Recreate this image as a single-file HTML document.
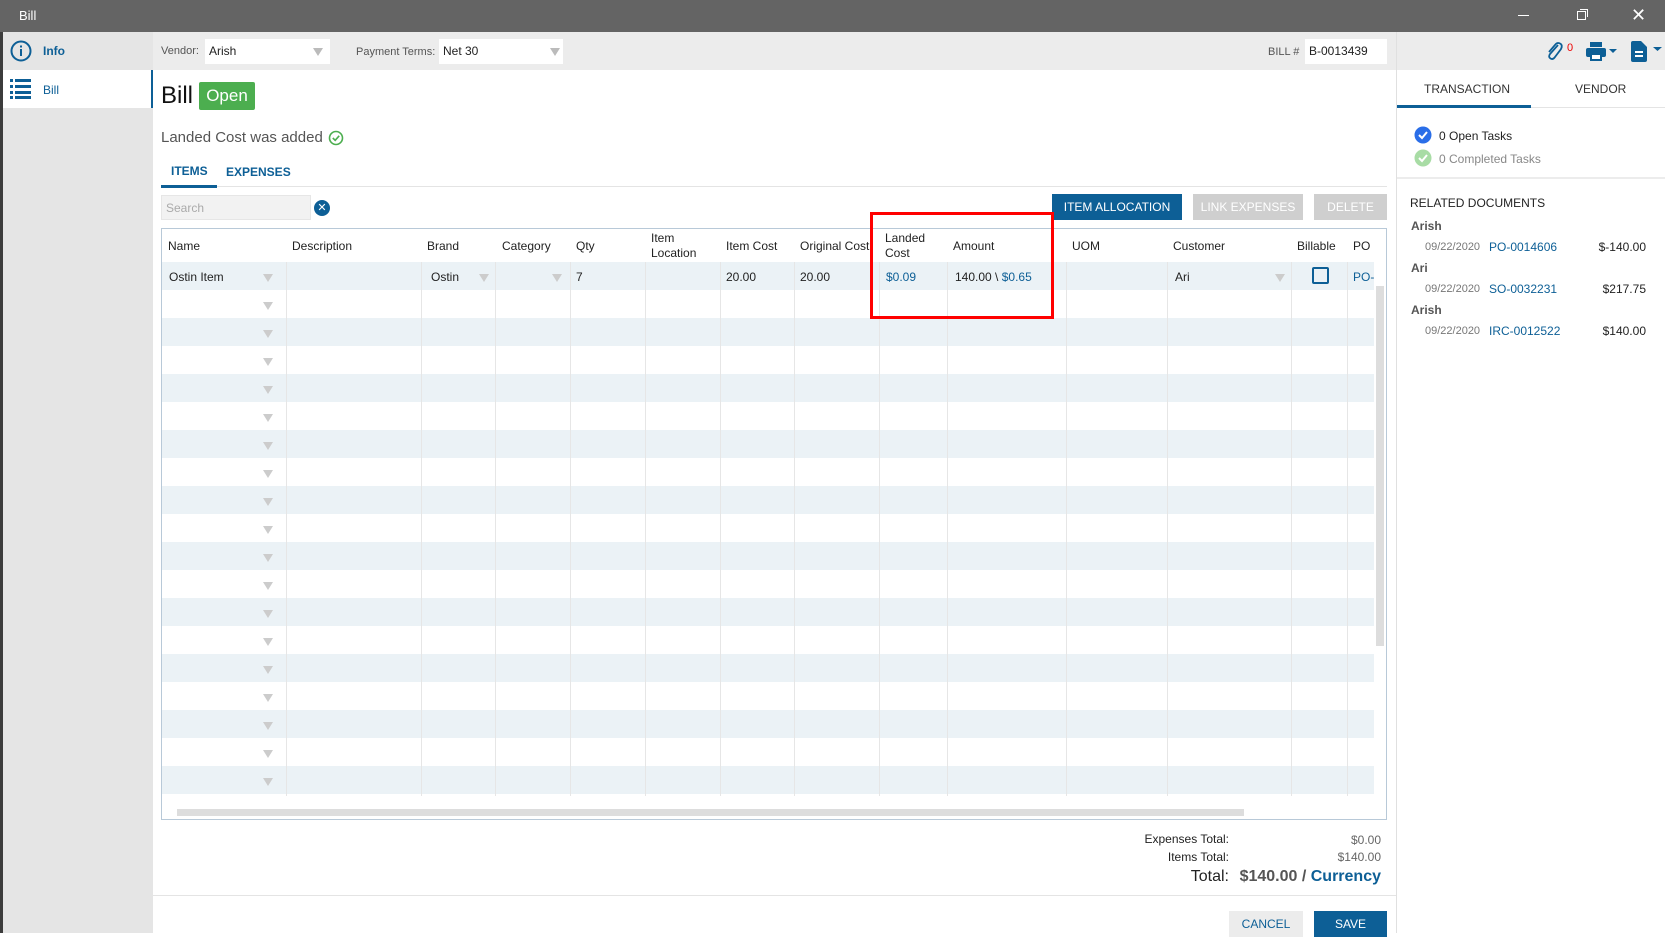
<!DOCTYPE html>
<html><head><meta charset="utf-8"><style>
*{box-sizing:border-box;margin:0;padding:0}
body{width:1665px;height:933px;overflow:hidden;font-family:"Liberation Sans",sans-serif;font-size:12px;color:#222;background:#fff;position:relative}
.a{position:absolute}
.blue{color:#0d5f96}
.sel{position:absolute;background:#fff;height:25px;font-size:12px;padding:5px 4px}
.tri{position:absolute;width:0;height:0;border-left:5px solid transparent;border-right:5px solid transparent;border-top:8px solid #bbb}
.btn{position:absolute;height:26px;color:#fff;font-size:12px;text-align:center;line-height:26px}
.col{position:absolute;top:0;bottom:0;width:1px;background:#e6e6e6}
.hd{position:absolute;top:0;font-size:12px;color:#222}
.row{position:absolute;left:0;width:1212px;height:28px}
</style></head><body>
<div class="a" style="left:0;top:0;width:1665px;height:32px;background:#646464"></div>
<div class="a" style="left:19px;top:8px;color:#fff;font-size:13px">Bill</div>
<div class="a" style="left:1518px;top:15px;width:11px;height:1px;background:#fff"></div>
<div class="a" style="left:1577px;top:11px;width:9px;height:9px;border:1px solid #fff"></div>
<div class="a" style="left:1580px;top:9px;width:8px;height:8px;border-top:1px solid #fff;border-right:1px solid #fff"></div>
<div class="a" style="left:1631px;top:5px;color:#fff;font-size:18px">✕</div>
<div class="a" style="left:0;top:32px;width:3px;height:901px;background:#3c3c3c"></div>
<div class="a" style="left:3px;top:32px;width:150px;height:901px;background:#e5e5e5"></div>
<div class="a" style="left:3px;top:70px;width:150px;height:38px;background:#fff;border-right:2px solid #0d5f96"></div>
<svg class="a" style="left:10px;top:40px" width="22" height="22"><circle cx="11" cy="11" r="9.5" fill="none" stroke="#0d5f96" stroke-width="2"/><rect x="10" y="9" width="2" height="7" fill="#0d5f96"/><rect x="10" y="5.5" width="2" height="2" fill="#0d5f96"/></svg>
<div class="a blue" style="left:43px;top:44px;font-size:12px;font-weight:bold">Info</div>
<svg class="a" style="left:10px;top:79px" width="22" height="20" fill="#0d5f96"><rect x="0" y="0" width="3" height="3"/><rect x="5" y="0" width="16" height="3"/><rect x="0" y="6" width="3" height="3"/><rect x="5" y="6" width="16" height="3"/><rect x="0" y="12" width="3" height="3"/><rect x="5" y="12" width="16" height="3"/><rect x="0" y="17" width="3" height="3"/><rect x="5" y="17" width="16" height="3"/></svg>
<div class="a blue" style="left:43px;top:83px;font-size:12px">Bill</div>
<div class="a" style="left:153px;top:32px;width:1512px;height:38px;background:#ececec"></div>
<div class="a" style="left:161px;top:45px;color:#555;font-size:11px">Vendor:</div>
<div class="sel" style="left:205px;top:39px;width:125px">Arish</div><div class="tri" style="left:313px;top:48px"></div>
<div class="a" style="left:356px;top:46px;color:#555;font-size:11px">Payment Terms:</div>
<div class="sel" style="left:439px;top:39px;width:124px">Net 30</div><div class="tri" style="left:550px;top:48px"></div>
<div class="a" style="left:1268px;top:46px;color:#555;font-size:11px">BILL #</div>
<div class="sel" style="left:1305px;top:39px;width:82px">B-0013439</div>
<div class="a" style="left:1396px;top:32px;width:1px;height:901px;background:#e0e0e0"></div>
<svg class="a" style="left:1544px;top:40px" width="20" height="22"><path d="M14 5 L6 14 Q4 17 6.5 18.5 Q9 20 11 17 L17 9 Q19 5 16 3.5 Q13 2 11 5 L5 12" fill="none" stroke="#0d5f96" stroke-width="1.8"/></svg>
<div class="a" style="left:1567px;top:42px;color:#e00;font-size:11px">0</div>
<svg class="a" style="left:1586px;top:42px" width="34" height="20" fill="#0d5f96"><rect x="4" y="0" width="12" height="5"/><rect x="0" y="6" width="20" height="9" rx="2"/><rect x="4" y="12" width="12" height="7"/><rect x="6" y="13" width="8" height="4" fill="#fff"/><path d="M23 7 L31 7 L27 11Z"/></svg>
<svg class="a" style="left:1631px;top:41px" width="34" height="22" fill="#0d5f96"><path d="M0 2 Q0 0 2 0 L10 0 L16 6 L16 19 Q16 21 14 21 L2 21 Q0 21 0 19Z"/><rect x="4" y="10" width="8" height="2" fill="#fff"/><rect x="4" y="14" width="8" height="2" fill="#fff"/><path d="M22 6 L31 6 L26.5 10Z"/></svg>
<div class="a" style="left:161px;top:82px;font-size:24px;color:#111">Bill</div>
<div class="a" style="left:199px;top:82px;width:56px;height:28px;background:#4cae4f;color:#fff;font-size:17px;text-align:center;line-height:28px;border-radius:2px">Open</div>
<div class="a" style="left:161px;top:129px;font-size:15px;color:#555">Landed Cost was added</div>
<svg class="a" style="left:328px;top:130px" width="16" height="16"><circle cx="8" cy="8" r="6.5" fill="none" stroke="#4cae4f" stroke-width="1.6"/><path d="M4.8 8 L7.2 10.3 L11.2 5.8" fill="none" stroke="#4cae4f" stroke-width="1.6"/></svg>
<div class="a blue" style="left:171px;top:164px;font-size:12px;font-weight:bold">ITEMS</div>
<div class="a blue" style="left:226px;top:165px;font-size:12px;font-weight:bold">EXPENSES</div>
<div class="a" style="left:161px;top:186px;width:1226px;height:1px;background:#e4e4e4"></div>
<div class="a" style="left:161px;top:185px;width:56px;height:3px;background:#0d5f96"></div>
<div class="a" style="left:161px;top:195px;width:150px;height:25px;background:#f2f2f2;border:1px solid #e6e6e6;color:#aaa;padding:5px 4px;font-size:12px">Search</div>
<div class="a" style="left:314px;top:200px;width:16px;height:16px;border-radius:50%;background:#0d5f96;color:#fff;font-size:11px;text-align:center;line-height:16px">✕</div>
<div class="btn" style="left:1052px;top:194px;width:130px;background:#0d5f96">ITEM ALLOCATION</div>
<div class="btn" style="left:1193px;top:194px;width:110px;background:#cfcfcf">LINK EXPENSES</div>
<div class="btn" style="left:1314px;top:194px;width:73px;background:#cfcfcf">DELETE</div>
<div class="a" style="left:161px;top:228px;width:1226px;height:592px;border:1px solid #b8c9d8;overflow:hidden">
 <div class="a" style="left:0;top:0;width:1226px;height:592px">
 <div class="row" style="top:33px;background:#ebf2f6"></div>
 <div class="row" style="top:89px;background:#ebf2f6"></div>
 <div class="row" style="top:145px;background:#ebf2f6"></div>
 <div class="row" style="top:201px;background:#ebf2f6"></div>
 <div class="row" style="top:257px;background:#ebf2f6"></div>
 <div class="row" style="top:313px;background:#ebf2f6"></div>
 <div class="row" style="top:369px;background:#ebf2f6"></div>
 <div class="row" style="top:425px;background:#ebf2f6"></div>
 <div class="row" style="top:481px;background:#ebf2f6"></div>
 <div class="row" style="top:537px;background:#ebf2f6"></div>
 <div class="a" style="left:0;top:567px;width:1226px;height:25px;background:#fff"></div>
 <div class="col" style="left:124px;top:0;bottom:25px"></div><div class="col" style="left:259px;bottom:25px"></div><div class="col" style="left:333px;bottom:25px"></div><div class="col" style="left:408px;bottom:25px"></div><div class="col" style="left:483px;bottom:25px"></div><div class="col" style="left:558px;bottom:25px"></div><div class="col" style="left:632px;bottom:25px"></div><div class="col" style="left:717px;bottom:25px"></div><div class="col" style="left:785px;bottom:25px"></div><div class="col" style="left:904px;bottom:25px"></div><div class="col" style="left:1005px;bottom:25px"></div><div class="col" style="left:1129px;bottom:25px"></div><div class="col" style="left:1185px;bottom:25px"></div>
 <div class="a" style="left:0;top:0;width:1226px;height:33px;background:#fff"></div>
 <div class="hd" style="left:6px;top:10px">Name</div>
 <div class="hd" style="left:130px;top:10px">Description</div>
 <div class="hd" style="left:265px;top:10px">Brand</div>
 <div class="hd" style="left:340px;top:10px">Category</div>
 <div class="hd" style="left:414px;top:10px">Qty</div>
 <div class="hd" style="left:489px;top:2px;line-height:15px">Item<br>Location</div>
 <div class="hd" style="left:564px;top:10px">Item Cost</div>
 <div class="hd" style="left:638px;top:10px">Original Cost</div>
 <div class="hd" style="left:723px;top:2px;line-height:15px">Landed<br>Cost</div>
 <div class="hd" style="left:791px;top:10px">Amount</div>
 <div class="hd" style="left:910px;top:10px">UOM</div>
 <div class="hd" style="left:1011px;top:10px">Customer</div>
 <div class="hd" style="left:1135px;top:10px">Billable</div>
 <div class="hd" style="left:1191px;top:10px">PO</div>
 <div class="a" style="left:7px;top:41px">Ostin Item</div>
 <div class="a" style="left:269px;top:41px">Ostin</div>
 <div class="a" style="left:414px;top:41px">7</div>
 <div class="a" style="left:564px;top:41px">20.00</div>
 <div class="a" style="left:638px;top:41px">20.00</div>
 <div class="a blue" style="left:724px;top:41px">$0.09</div>
 <div class="a" style="left:793px;top:41px">140.00 \ <span class="blue">$0.65</span></div>
 <div class="a" style="left:1013px;top:41px">Ari</div>
 <div class="a" style="left:1150px;top:38px;width:17px;height:17px;border:2px solid #0d5f96;border-radius:2px"></div>
 <div class="a blue" style="left:1191px;top:41px">PO-</div>
 <div class="tri" style="left:101px;top:45px;border-top-color:#ccc"></div>
 <div class="tri" style="left:317px;top:45px;border-top-color:#ccc"></div>
 <div class="tri" style="left:390px;top:45px;border-top-color:#ccc"></div>
 <div class="tri" style="left:1113px;top:45px;border-top-color:#ccc"></div>
 <div class="tri" style="left:101px;top:73px;border-top-color:#ccc"></div>
 <div class="tri" style="left:101px;top:101px;border-top-color:#ccc"></div>
 <div class="tri" style="left:101px;top:129px;border-top-color:#ccc"></div>
 <div class="tri" style="left:101px;top:157px;border-top-color:#ccc"></div>
 <div class="tri" style="left:101px;top:185px;border-top-color:#ccc"></div>
 <div class="tri" style="left:101px;top:213px;border-top-color:#ccc"></div>
 <div class="tri" style="left:101px;top:241px;border-top-color:#ccc"></div>
 <div class="tri" style="left:101px;top:269px;border-top-color:#ccc"></div>
 <div class="tri" style="left:101px;top:297px;border-top-color:#ccc"></div>
 <div class="tri" style="left:101px;top:325px;border-top-color:#ccc"></div>
 <div class="tri" style="left:101px;top:353px;border-top-color:#ccc"></div>
 <div class="tri" style="left:101px;top:381px;border-top-color:#ccc"></div>
 <div class="tri" style="left:101px;top:409px;border-top-color:#ccc"></div>
 <div class="tri" style="left:101px;top:437px;border-top-color:#ccc"></div>
 <div class="tri" style="left:101px;top:465px;border-top-color:#ccc"></div>
 <div class="tri" style="left:101px;top:493px;border-top-color:#ccc"></div>
 <div class="tri" style="left:101px;top:521px;border-top-color:#ccc"></div>
 <div class="tri" style="left:101px;top:549px;border-top-color:#ccc"></div>
 <div class="a" style="left:15px;top:580px;width:1067px;height:7px;background:#ddd"></div>
 <div class="a" style="left:1214px;top:57px;width:8px;height:360px;background:#ddd"></div>
 </div>
</div>
<div class="a" style="left:870px;top:212px;width:184px;height:107px;border:3px solid #f00"></div>
<div class="a" style="left:1100px;top:832px;width:129px;text-align:right;font-size:12px">Expenses Total:</div>
<div class="a" style="left:1280px;top:833px;width:101px;text-align:right;color:#666">$0.00</div>
<div class="a" style="left:1100px;top:850px;width:129px;text-align:right;font-size:12px">Items Total:</div>
<div class="a" style="left:1280px;top:850px;width:101px;text-align:right;color:#666">$140.00</div>
<div class="a" style="left:1100px;top:868px;width:129px;text-align:right;font-size:16px">Total:</div>
<div class="a" style="left:1200px;top:868px;width:181px;text-align:right;font-size:16px;font-weight:bold;color:#555">$140.00 / <span class="blue">Currency</span></div>
<div class="a" style="left:153px;top:895px;width:1243px;height:1px;background:#e4e4e4"></div>
<div class="btn" style="left:1229px;top:911px;width:74px;background:#ececec;color:#0d5f96">CANCEL</div>
<div class="btn" style="left:1314px;top:911px;width:73px;background:#0d5f96">SAVE</div>
<div class="a" style="left:1424px;top:82px;font-size:12px;color:#333">TRANSACTION</div>
<div class="a" style="left:1575px;top:82px;font-size:12px;color:#333">VENDOR</div>
<div class="a" style="left:1397px;top:107px;width:268px;height:1px;background:#e4e4e4"></div>
<div class="a" style="left:1397px;top:105px;width:134px;height:3px;background:#0d5f96"></div>
<svg class="a" style="left:1414px;top:126px" width="18" height="18"><circle cx="9" cy="9" r="8.5" fill="#2a6ee8"/><path d="M5 9 L8 12 L13 6" fill="none" stroke="#fff" stroke-width="2"/></svg>
<div class="a" style="left:1439px;top:129px;font-size:12px;color:#222">0 Open Tasks</div>
<svg class="a" style="left:1414px;top:149px" width="18" height="18"><circle cx="9" cy="9" r="8.5" fill="#a8dca5"/><path d="M5 9 L8 12 L13 6" fill="none" stroke="#fff" stroke-width="2"/></svg>
<div class="a" style="left:1439px;top:152px;font-size:12px;color:#888">0 Completed Tasks</div>
<div class="a" style="left:1397px;top:177px;width:268px;height:2px;background:#ececec"></div>
<div class="a" style="left:1410px;top:196px;font-size:12px;color:#222">RELATED DOCUMENTS</div>
<div class="a" style="left:1411px;top:219px;font-weight:bold;color:#555">Arish</div>
<div class="a" style="left:1425px;top:241px;color:#777;font-size:11px">09/22/2020</div>
<div class="a blue" style="left:1489px;top:240px">PO-0014606</div>
<div class="a" style="left:1560px;top:240px;width:86px;text-align:right">$-140.00</div>
<div class="a" style="left:1411px;top:261px;font-weight:bold;color:#555">Ari</div>
<div class="a" style="left:1425px;top:283px;color:#777;font-size:11px">09/22/2020</div>
<div class="a blue" style="left:1489px;top:282px">SO-0032231</div>
<div class="a" style="left:1560px;top:282px;width:86px;text-align:right">$217.75</div>
<div class="a" style="left:1411px;top:303px;font-weight:bold;color:#555">Arish</div>
<div class="a" style="left:1425px;top:325px;color:#777;font-size:11px">09/22/2020</div>
<div class="a blue" style="left:1489px;top:324px">IRC-0012522</div>
<div class="a" style="left:1560px;top:324px;width:86px;text-align:right">$140.00</div>
</body></html>
